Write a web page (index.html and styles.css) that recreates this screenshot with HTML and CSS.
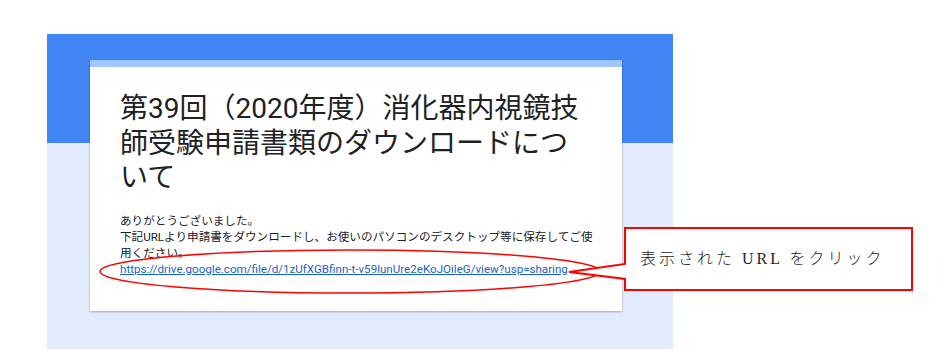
FILE: index.html
```html
<!DOCTYPE html>
<html lang="ja">
<head>
<meta charset="utf-8">
<title>第39回（2020年度）消化器内視鏡技師受験申請書類のダウンロードについて</title>
<link rel="stylesheet" href="styles.css">
</head>
<body>
<div class="page">
  <div class="form-bg">
    <div class="card">
      <h1 class="title">第39回（2020年度）消化器内視鏡技師受験申請書類のダウンロードについて</h1>
      <p class="msg">ありがとうございました。<br>下記URLより申請書をダウンロードし、お使いのパソコンのデスクトップ等に保存してご使<br>用ください。<br><a class="link" href="#">https://drive.google.com/file/d/1zUfXGBfinn-t-v59lunUre2eKoJOileG/view?usp=sharing</a></p>
    </div>
  </div>
  <svg class="annot" width="947" height="363" viewBox="0 0 947 363">
    <ellipse cx="350" cy="271.5" rx="250" ry="21.5" fill="none" stroke="#ff0000" stroke-width="1.4"/>
    <polygon points="625,228 912,228 912,290 625,290 625,279 569,272 625,264" fill="#ffffff" stroke="#ff0000" stroke-width="2"/>
  </svg>
  <div class="callout-text">表示された URL をクリック</div>
</div>
</body>
</html>
```

FILE: styles.css
```css
html, body {
  margin: 0;
  padding: 0;
  background: #ffffff;
}

.page {
  position: relative;
  width: 947px;
  height: 363px;
  overflow: hidden;
}

.form-bg {
  margin: 34px 0 0 47px;
  width: 626px;
  height: 315px;
  box-sizing: border-box;
  padding: 26px 0 0 43px;
  background: linear-gradient(#4285f4 0, #4285f4 109px, #e2ebfc 109px, #e2ebfc 100%);
}

.card {
  width: 532px;
  height: 251px;
  box-sizing: border-box;
  border-top: 7px solid #a0c4fc;
  padding: 25px 30px 0 30px;
  background: #ffffff;
  box-shadow: 0 1px 2px rgba(60, 64, 67, 0.35), 0 0 1px rgba(60, 64, 67, 0.25);
  font-family: Roboto, "Noto Sans CJK JP", sans-serif;
  color: #202124;
}

.title {
  margin: 0;
  width: 475px;
  font-size: 28px;
  line-height: 34.5px;
  font-weight: 400;
  color: #202124;
}

.msg {
  margin: 17px -12px 0 0;
  font-size: 11.6px;
  line-height: 16px;
  color: #202124;
}

.link {
  color: #1a5fd0;
  text-decoration: underline;
}

.annot {
  position: absolute;
  left: 0;
  top: 0;
}

.callout-text {
  position: absolute;
  left: 640px;
  top: 249px;
  font-family: "Liberation Serif", "Noto Sans CJK JP", serif;
  font-size: 16px;
  line-height: 20px;
  letter-spacing: 3px;
  font-weight: 300;
  color: #222222;
  white-space: nowrap;
}
```
